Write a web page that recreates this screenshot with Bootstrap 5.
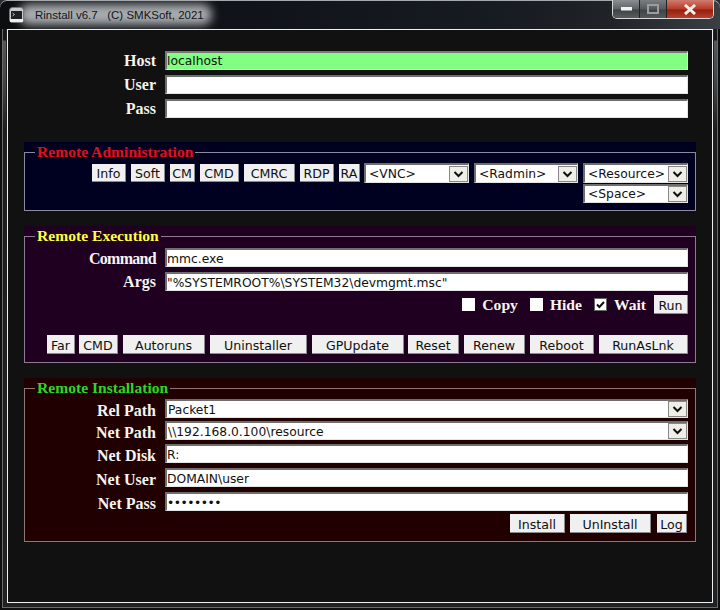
<!DOCTYPE html>
<html lang="en">
<head>
<meta charset="utf-8">
<title>Rinstall v6.7</title>
<link href="https://cdn.jsdelivr.net/npm/bootstrap@5.3.0/dist/css/bootstrap.min.css" rel="stylesheet">
<style>
html,body{margin:0;height:610px;overflow:hidden;background:#2a2c2e}
.wnd{height:610px;width:720px;border-radius:7px 7px 0 0;background:linear-gradient(180deg,#23272c 0,#151719 40px,#54585b 41px,#3e4143 90px,#1c1d1e 130px,#202122 100%);box-shadow:inset 0 0 0 2px #0f0f0f,inset 0 0 0 3px #6a6a6a}
.tbar{height:29px;background:linear-gradient(90deg,#0c0e10 0,#10141a 35%,#171b22 70%,#202428 85%,#3b3f44 100%);border-radius:7px 7px 0 0;box-shadow:inset 0 1px 0 #a5a9ad;overflow:hidden;isolation:isolate}
.ticon{width:15px;height:16px;margin:7px 0 0 9px;flex:none;position:relative;z-index:1}
.ttext{position:relative;font:11.5px/14px "Liberation Sans",sans-serif;color:#10141c;white-space:pre;margin:0 0 0 11px;padding-top:8px;height:29px}
.ttext::before{content:"";position:absolute;z-index:-1;left:-16px;right:-8px;top:4px;bottom:4px;background:#a9acaf;filter:blur(5px);border-radius:10px}
.ctl{height:19px;display:flex;margin-right:6px;border:1px solid #d5d8da;border-top:0;border-radius:0 0 5px 5px;overflow:hidden;flex:none}
.ctl>span{display:flex;align-items:center;justify-content:center;height:18px}
.cmin{width:27px;background:linear-gradient(180deg,#8a8f93 0,#5e6265 50%,#3f4245 55%,#5a5e61 100%);border-right:1px solid #222}
.cmax{width:27px;background:linear-gradient(180deg,#7a7e80 0,#55595b 50%,#3f4345 55%,#54585a 100%);border-right:1px solid #222}
.cclose{width:46px;background:linear-gradient(180deg,#cf7c70 0,#b83a26 50%,#951f10 55%,#b6402a 100%)}
.client{margin:0 7px;height:574px;background:#111;border:1px solid #eee;box-shadow:0 0 0 1px #222;padding:21px 16px 0}
.frow{display:flex;align-items:center}
.flab{width:123px;margin:0 9px 0 0;text-align:right;font:700 16px/18px "Liberation Serif",serif;color:#f6f4f0;flex:none}
.sect-c .flab{line-height:15px;padding-top:3px}
.narrow{letter-spacing:-.7px;line-height:16px!important;padding-top:2px}
.toprow{padding-right:8px}
.toprow .flab{width:132px}
.sect{margin-top:15px}
.sect-a{background:#000020;margin-top:24px}
.sect-b{background:#200020}
.sect-c{background:#200000}
.fset{margin:0;padding:0 7px 6px 8px;min-width:0;border:1px solid #8b8b9c}
.sect-b .fset{border-color:#8f7a8f}
.sect-c .fset{border-color:#8f7575}
.sect-a .fset{height:69px}.sect-b .fset{height:137px}.sect-c .fset{height:164px}
.fleg{float:none;width:auto;margin:0 0 0 2px;padding:0 2px;font:700 15.6px/20px "Liberation Serif",serif;height:20px}
.leg-r{color:#e0101c}.leg-y{color:#ffff40}.leg-g{color:#28d828}
input.form-control.fld,select.form-select.fld{flex:1 1 0;min-width:0;height:19px;min-height:0;padding:0;font:12.3px/16px "DejaVu Sans",sans-serif;color:#111;background-color:#fff;border-width:2px 1px 1px 2px;border-style:solid;border-color:#6e6e6e #e4e4e4 #e4e4e4 #6e6e6e;border-radius:0;box-shadow:none}
input.form-control.host{background-color:#80ff80;border-color:#777 #d0ffd0 #d0ffd0 #777}
input.form-control.dots{letter-spacing:-.5px}
.sect-b input.form-control.fld,.sect-c input.form-control.fld{padding-top:1px}
select.form-select.fld{padding-left:1px;background-image:url("data:image/svg+xml,%3Csvg xmlns='http://www.w3.org/2000/svg' width='19' height='16'%3E%3Crect x='.5' y='.5' width='18' height='15' fill='%23efefe8' stroke='%23888'/%3E%3Cpath d='M5.5 6l4 4 4-4' fill='none' stroke='%23111' stroke-width='2'/%3E%3C/svg%3E");background-repeat:no-repeat;background-position:right 0 center;background-size:19px 16px}
.sect-c select.form-select.fld{padding-top:1px}
.sect-a select.form-select.fld{padding-left:3px}
select.sel-vnc{flex:none!important;width:105px;height:20px!important}
select.sel-rad{flex:none!important;width:104px;height:20px!important}
select.sel-res{flex:none!important;width:105px;height:20px!important}
select.sel-spc{flex:none!important;width:105px;height:19px!important;margin-top:1px}
.btn.rb{height:19px;padding:4px 0 0;font:12.6px/14px "DejaVu Sans",sans-serif;color:#111;background:#f0f0f0;border:0;border-right:1px solid #8d8a8d;border-bottom:1px solid #8d8a8d;border-radius:0;flex:none}
.rowa .btn.rb{margin-top:1px;height:18px;padding-top:3px}
.g5{gap:5px}
.w21{width:21px}.w25{width:25px}.w28{width:28px}.w30{width:30px}.w34{width:34px}.w39{width:39px}.w51{width:51px}.w55{width:55px}.w61{width:61px}.w64{width:64px}.w81{width:81px}.w82{width:82px}.w89{width:89px}.w92{width:92px}.w97{width:97px}
.btn.rb.tight{margin-right:-1px}
.m2t{margin-top:2px}.m1t{margin-top:1px}.m3t{margin-top:3px}.m4t{margin-top:4px}.m5t{margin-top:5px}
.optrow{height:19px;margin-top:4px}
.form-check-input.cb{width:13px;height:13px;margin:0;border-radius:0;border:0;background-color:#fff;box-shadow:none;flex:none}
.form-check-input.cb:checked{background-color:#fff;border:1px solid #666;background-image:url("data:image/svg+xml,%3Csvg xmlns='http://www.w3.org/2000/svg' viewBox='0 0 11 11'%3E%3Cpath d='M2 5.5l2.4 2.5L9 3' fill='none' stroke='%23111' stroke-width='2'/%3E%3C/svg%3E");background-size:11px 11px}
.clab{font:700 15.6px/18px "Liberation Serif",serif;color:#f6f4f0;margin:0 0 0 7px}
.m12{margin-right:12px}.m8{margin-right:8px}
.btnrow2{margin-top:21px}
.btnrow3{margin-top:3px;padding-right:1px}
.lgap{margin-left:1px}
.rowa{margin-top:1px}
</style>
</head>
<body>
<div class="wnd">
  <div class="tbar d-flex align-items-start">
    <svg class="ticon" viewBox="0 0 15 16"><rect x="0.5" y="0.5" width="14" height="15" rx="3" fill="#c8ccd0" stroke="#777"/><rect x="2" y="4" width="11" height="8" fill="#1c2024"/><path d="M3.5 6l2 1.5-2 1.5" stroke="#ddd" fill="none" stroke-width=".8"/><rect x="1" y="12" width="13" height="3" fill="#eef0f2"/></svg>
    <div class="ttext">Rinstall v6.7   (C) SMKSoft, 2021</div>
    <div class="ctl ms-auto">
      <span class="cmin"><svg width="11" height="4"><rect width="11" height="3.5" fill="#f2f2f2"/></svg></span>
      <span class="cmax"><svg width="12" height="10"><rect x="1" y="1" width="10" height="8" fill="none" stroke="#9a9d9f" stroke-width="2"/></svg></span>
      <span class="cclose"><svg width="14" height="11"><path d="M2 1l10 9M12 1L2 10" stroke="#f4eeea" stroke-width="3"/></svg></span>
    </div>
  </div>
  <div class="client">
    <form>
      <div class="frow toprow"><label class="flab">Host</label><input class="form-control fld host" value="localhost"></div>
      <div class="frow toprow m5t"><label class="flab">User</label><input class="form-control fld"></div>
      <div class="frow toprow m5t"><label class="flab">Pass</label><input class="form-control fld" type="text"></div>

      <div class="sect sect-a">
        <fieldset class="fset">
          <legend class="fleg leg-r">Remote Administration</legend>
          <div class="d-flex justify-content-end align-items-start g5 rowa">
            <button type="button" class="btn rb w34">Info</button>
            <button type="button" class="btn rb w34">Soft</button>
            <button type="button" class="btn rb w25">CM</button>
            <button type="button" class="btn rb w39">CMD</button>
            <button type="button" class="btn rb w51">CMRC</button>
            <button type="button" class="btn rb w34">RDP</button>
            <button type="button" class="btn rb w21 tight">RA</button>
            <select class="form-select fld sel-vnc"><option>&lt;VNC&gt;</option></select>
            <select class="form-select fld sel-rad"><option>&lt;Radmin&gt;</option></select>
            <div class="d-flex flex-column">
              <select class="form-select fld sel-res"><option>&lt;Resource&gt;</option></select>
              <select class="form-select fld sel-spc"><option>&lt;Space&gt;</option></select>
            </div>
          </div>
        </fieldset>
      </div>

      <div class="sect sect-b">
        <fieldset class="fset">
          <legend class="fleg leg-y">Remote Execution</legend>
          <div class="frow m2t"><label class="flab narrow">Command</label><input class="form-control fld" value="mmc.exe"></div>
          <div class="frow m5t"><label class="flab">Args</label><input class="form-control fld" value="&quot;%SYSTEMROOT%\SYSTEM32\devmgmt.msc&quot;"></div>
          <div class="d-flex justify-content-end align-items-center optrow">
            <input class="form-check-input cb" type="checkbox"><label class="clab m12">Copy</label>
            <input class="form-check-input cb" type="checkbox"><label class="clab m12">Hide</label>
            <input class="form-check-input cb" type="checkbox" checked><label class="clab m8">Wait</label>
            <button type="button" class="btn rb w34">Run</button>
          </div>
          <div class="d-flex justify-content-end g5 btnrow2">
            <button type="button" class="btn rb w28 tight">Far</button>
            <button type="button" class="btn rb w39">CMD</button>
            <button type="button" class="btn rb w82">Autoruns</button>
            <button type="button" class="btn rb w97">Uninstaller</button>
            <button type="button" class="btn rb w92 tight">GPUpdate</button>
            <button type="button" class="btn rb w51">Reset</button>
            <button type="button" class="btn rb w61">Renew</button>
            <button type="button" class="btn rb w64">Reboot</button>
            <button type="button" class="btn rb w89">RunAsLnk</button>
          </div>
        </fieldset>
      </div>

      <div class="sect sect-c">
        <fieldset class="fset">
          <legend class="fleg leg-g">Remote Installation</legend>
          <div class="frow m1t"><label class="flab">Rel Path</label><select class="form-select fld"><option>Packet1</option></select></div>
          <div class="frow m3t"><label class="flab">Net Path</label><select class="form-select fld"><option>\\192.168.0.100\resource</option></select></div>
          <div class="frow m4t"><label class="flab">Net Disk</label><input class="form-control fld" value="R:"></div>
          <div class="frow m5t"><label class="flab">Net User</label><input class="form-control fld" value="DOMAIN\user"></div>
          <div class="frow m5t"><label class="flab">Net Pass</label><input class="form-control fld dots" type="password" value="12345678"></div>
          <div class="d-flex justify-content-end g5 btnrow3">
            <button type="button" class="btn rb w55">Install</button>
            <button type="button" class="btn rb w81">UnInstall</button>
            <button type="button" class="btn rb w30 lgap">Log</button>
          </div>
        </fieldset>
      </div>
    </form>
  </div>
</div>
<script src="https://cdn.jsdelivr.net/npm/bootstrap@5.3.0/dist/js/bootstrap.bundle.min.js"></script>
</body>
</html>
